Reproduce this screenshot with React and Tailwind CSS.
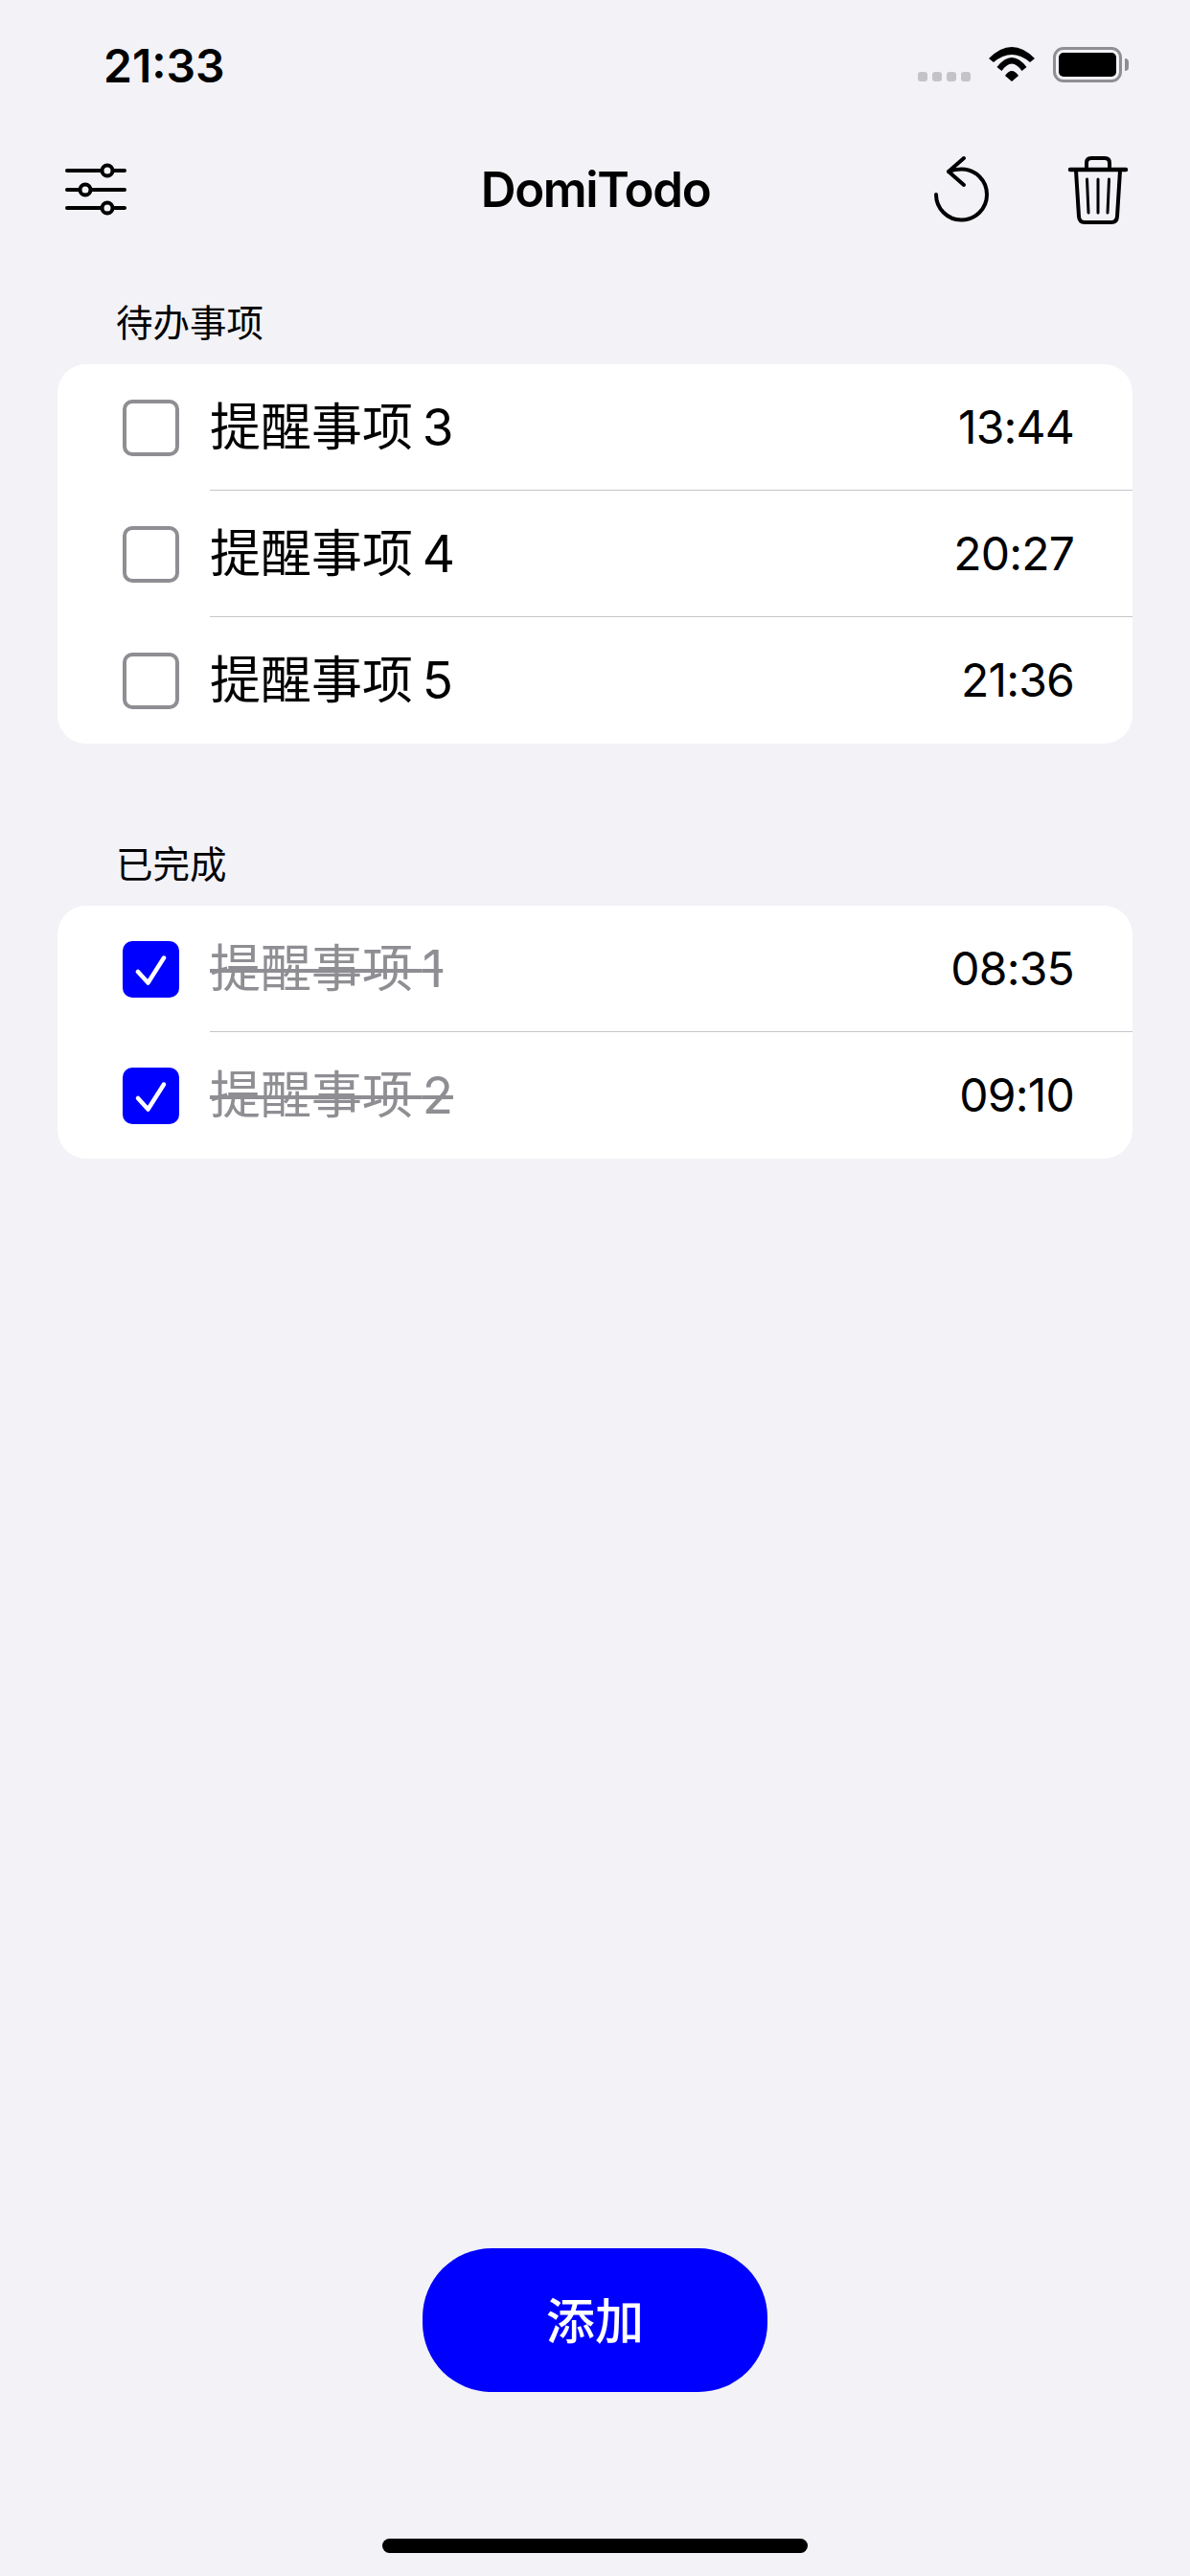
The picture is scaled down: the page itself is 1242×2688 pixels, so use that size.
const pending = [
  { id: 3, time: "13:44" },
  { id: 4, time: "20:27" },
  { id: 5, time: "21:36" },
];

const done = [
  { id: 1, time: "08:35" },
  { id: 2, time: "09:10" },
];

function SlidersIcon() {
  return (
    <svg width="70" height="62" viewBox="64 168 70 62" fill="none" stroke="black" strokeWidth="4" strokeLinecap="round">
      <path d="M70 179H105M119 179H130M70 199H82M96 199H130M70 218H105M119 218H130" />
      <circle cx="112" cy="179" r="5.500" />
      <circle cx="89" cy="199" r="5.500" />
      <circle cx="112" cy="218" r="5.500" />
    </svg>
  );
}

function UndoIcon() {
  return (
    <svg width="62" height="72" viewBox="973 163 62 72" fill="none" stroke="black" strokeWidth="4" strokeLinecap="round" strokeLinejoin="round">
      <path d="M977 205A26.500 26.500 0 1 0 1003.500 178.500C998 178.500 994 179.500 990 181" />
      <path d="M1006 167L990 181L1006 195" />
    </svg>
  );
}

function TrashIcon() {
  return (
    <svg width="66" height="75" viewBox="1113 161 66 75" fill="none" stroke="black" strokeLinecap="round" strokeLinejoin="round">
      <path strokeWidth="4.500" d="M1117 177H1175" />
      <path strokeWidth="4" d="M1134 176V170C1134 166 1136 165 1139 165H1153C1156 165 1158 166 1158 170V176" />
      <path strokeWidth="4" d="M1123 178L1126 226C1126.300 230 1128 232 1132 232H1160C1164 232 1165.700 230 1166 226L1169 178" />
      <path strokeWidth="3" d="M1134.500 187L1136 222M1146 187V222M1157.500 187L1156 222" />
    </svg>
  );
}

function WifiIcon() {
  return (
    <svg width="48" height="36" viewBox="1032 49 48 36" fill="black">
      <path d="M1032 61Q1056 37 1080 61L1075 65Q1056 49 1037 65Z" />
      <path d="M1040.500 70Q1056 50 1071.500 70L1066.500 74Q1056 59 1045.500 74Z" />
      <path d="M1049 79Q1056 69 1063 79L1056 85Z" />
    </svg>
  );
}

function CheckMark() {
  return (
    <svg width="59" height="59" viewBox="0 0 59 59" fill="none" stroke="white" strokeWidth="4.500" strokeLinecap="round" strokeLinejoin="round">
      <path d="M16 32L26.500 43.500L43 17.500" />
    </svg>
  );
}

function Row({ id, time, checked, last }) {
  return (
    <div className="flex h-[132px] items-center pl-[68px]">
      {checked ? (
        <div className="h-[59px] w-[59px] shrink-0 rounded-[10px] bg-[#0000ff]">
          <CheckMark />
        </div>
      ) : (
        <div className="h-[59px] w-[59px] shrink-0 rounded-[10px] border-[4px] border-[#8e8e93]" />
      )}
      <div className={`ml-[32px] flex h-full flex-1 items-center justify-between pr-[61px] ${last ? "" : "border-b border-[#c6c6c8]"}`}>
        <span className={`pt-[2px] text-[53px] ${checked ? "text-[#8e8e93] line-through decoration-[4px]" : "text-black"}`}>
          提醒事项{"\u2009"}{id}
        </span>
        <span className="text-[48px] tracking-[-0.800px] text-black">{time}</span>
      </div>
    </div>
  );
}

function Section({ title, items, checked }) {
  return (
    <section>
      <div className="flex h-[84px] items-center pl-[121px] text-[38.500px] text-black">{title}</div>
      <div className="mx-[60px] overflow-hidden rounded-[30px] bg-white">
        {items.map((item, i) => (
          <Row key={item.id} id={item.id} time={item.time} checked={checked} last={i === items.length - 1} />
        ))}
      </div>
    </section>
  );
}

export default function App() {
  return (
    <div className="flex min-h-[2688px] w-[1242px] flex-col bg-[#f2f2f7] font-[family-name:Inter,'Noto_Sans_CJK_SC',sans-serif]">
      <div className="flex h-[100px] justify-between pl-[108px] pr-[64px] pt-[40px]">
        <span className="text-[48px] leading-[58px] font-semibold text-black">21:33</span>
        <div className="flex items-end gap-[19px] pb-[14px]">
          <div className="mb-px flex gap-[4.500px]">
            <div className="h-[10px] w-[10.500px] rounded-[3px] bg-[#c4c4c8]" />
            <div className="h-[10px] w-[10.500px] rounded-[3px] bg-[#c4c4c8]" />
            <div className="h-[10px] w-[10.500px] rounded-[3px] bg-[#c4c4c8]" />
            <div className="h-[10px] w-[10.500px] rounded-[3px] bg-[#c4c4c8]" />
          </div>
          <div className="mb-px">
            <WifiIcon />
          </div>
          <div className="flex items-center gap-[3px]">
            <div className="h-[37px] w-[72px] rounded-[11px] border-[3px] border-[#8e8e93] p-[3px]">
              <div className="h-full w-full rounded-[5px] bg-black" />
            </div>
            <div className="h-[13px] w-[4px] rounded-r-full bg-[#8e8e93]" />
          </div>
        </div>
      </div>

      <header className="flex h-[196px] items-center pl-[64px] pr-[63px]">
        <div className="flex flex-1">
          <SlidersIcon />
        </div>
        <h1 className="text-[51px] font-semibold tracking-[-1.400px] text-black">DomiTodo</h1>
        <div className="flex flex-1 justify-end gap-[78px]">
          <UndoIcon />
          <TrashIcon />
        </div>
      </header>

      <div className="flex flex-col gap-[85px]">
        <Section title="待办事项" items={pending} />
        <Section title="已完成" items={done} checked />
      </div>

      <div className="flex flex-1 flex-col items-center justify-end">
        <button className="h-[150px] w-[360px] rounded-[72px] bg-[#0000ff] pt-[4px] text-[51px] font-medium text-white">添加</button>
        <div className="mb-[24px] mt-[153px] h-[15px] w-[444px] rounded-full bg-black" />
      </div>
    </div>
  );
}
